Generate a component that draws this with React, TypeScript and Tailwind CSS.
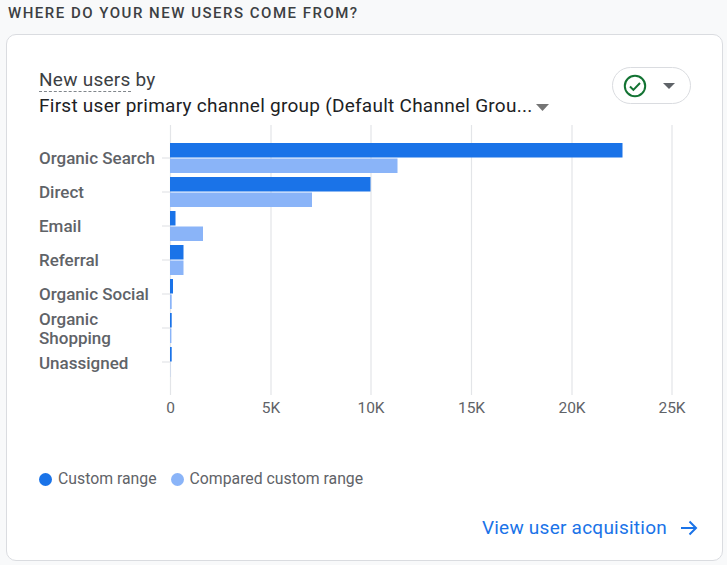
import React from 'react';

const DARK = '#1a73e8';
const LIGHT = '#8ab4f8';
const GRID = '#e3e5e8';

// y, x end of the dark and light bar in each group
const bars = [
	{ label: ['Organic Search'], y: 143, dark: 622.5, light: 397.5, text: 158 },
	{ label: ['Direct'], y: 177, dark: 370.5, light: 312, text: 192 },
	{ label: ['Email'], y: 211, dark: 175.5, light: 203, text: 226 },
	{ label: ['Referral'], y: 245, dark: 183.5, light: 183.5, text: 260 },
	{ label: ['Organic Social'], y: 279, dark: 173, light: 171.7, text: 294 },
	{ label: ['Organic', 'Shopping'], y: 313, dark: 171.7, light: 171.4, text: 319.5 },
	{ label: ['Unassigned'], y: 347, dark: 171.7, light: 170.2, text: 363 },
];

const ticks = [
	{ x: 170.5, label: '0' },
	{ x: 271, label: '5K' },
	{ x: 371, label: '10K' },
	{ x: 471.5, label: '15K' },
	{ x: 572, label: '20K' },
	{ x: 672, label: '25K' },
];

const App = () => {
	return (
		<div className="h-[565px] w-[727px] overflow-hidden bg-[#f8f9fa] px-[6px] font-['Roboto',sans-serif]">
			<h5 className="h-[34px] pl-[2px] pt-[5px] text-[15px] leading-4 font-medium tracking-[1.5px] text-[#3c4043]">
				WHERE DO YOUR NEW USERS COME FROM?
			</h5>

			<div className="flex h-[527px] w-[717px] flex-col rounded-[10px] border border-[#dadce0] bg-white">
				<div className="flex items-start justify-between pl-[32px] pr-[31px] pt-[32px]">
					<div className="pt-[1px] text-[#3c4043]">
						<div className="h-[26px] text-[19px] leading-6 tracking-[0.26px]">
							<span className="border-b border-dashed border-[#80868b]">New users</span> by
						</div>
						<div className="flex h-[24px] items-center whitespace-nowrap text-[19px] leading-6 tracking-[0.26px] text-[#202124]">
							First user primary channel group (Default Channel Grou...
							<svg width="14" height="7" viewBox="0 0 14 7" className="mt-[2px] ml-[3px]">
								<path d="M0 0h13L6.5 7z" fill="#757575" />
							</svg>
						</div>
					</div>
					<div className="flex h-[37px] w-[79px] items-center rounded-full border border-[#dadce0] pl-[10px]">
						<svg width="24" height="24" viewBox="0 0 24 24" fill="none">
							<circle cx="12" cy="12" r="10.2" stroke="#137333" strokeWidth="2" />
							<path d="M7 12.5l3.4 3.4L17 9" stroke="#137333" strokeWidth="2" />
						</svg>
						<svg width="12" height="6" viewBox="0 0 12 6" className="ml-[16px]">
							<path d="M0 0h12L6 6z" fill="#5f6368" />
						</svg>
					</div>
				</div>

				{/* chart, coordinates are page pixels */}
				<svg width="715" height="300" viewBox="7 125 715 300" className="mt-[7px] block">
					{ticks.map((t) => (
						<g key={t.x}>
							<line x1={t.x} x2={t.x} y1="125" y2="395" stroke={GRID} strokeWidth="1.2" />
							<text x={t.x} y="413" textAnchor="middle" fontSize="15.5" fill="#5f6368" fontFamily="Roboto">
								{t.label}
							</text>
						</g>
					))}
					{bars.map((b) => (
						<g key={b.y}>
							<line x1="162" x2="170" y1={b.y + 15} y2={b.y + 15} stroke={GRID} strokeWidth="1.2" />
							<rect x="170" y={b.y} width={b.dark - 170} height="14.5" fill={DARK} />
							<rect x="170" y={b.y + 15.5} width={b.light - 170} height="14.5" fill={LIGHT} />
							{b.label.map((line, i) => (
								<text key={line} x="39" y={b.text + 5.5 + i * 19} fontSize="17" fontWeight="500" fill="#5f6368" fontFamily="Roboto">
									{line}
								</text>
							))}
						</g>
					))}
				</svg>

				<div className="mt-[42px] flex h-[24px] items-center pl-[32px] text-[15.8px] text-[#5f6368]">
					<span className="mr-[6px] size-[13px] rounded-full bg-[#1a73e8]"></span>
					Custom range
					<span className="ml-[14px] mr-[6px] size-[13px] rounded-full bg-[#8ab4f8]"></span>
					Compared custom range
				</div>

				<div className="mt-[23px] flex items-center justify-end pr-[24px] text-[19px] tracking-[0.24px] text-[#1a73e8]">
					View user acquisition
					<svg width="18" height="18" viewBox="0 0 18 18" fill="none" className="ml-[13px]">
						<path d="M1 9h15M9.5 2.5L16 9l-6.5 6.5" stroke="#1a73e8" strokeWidth="2" />
					</svg>
				</div>
			</div>
		</div>
	);
};

export default App;
